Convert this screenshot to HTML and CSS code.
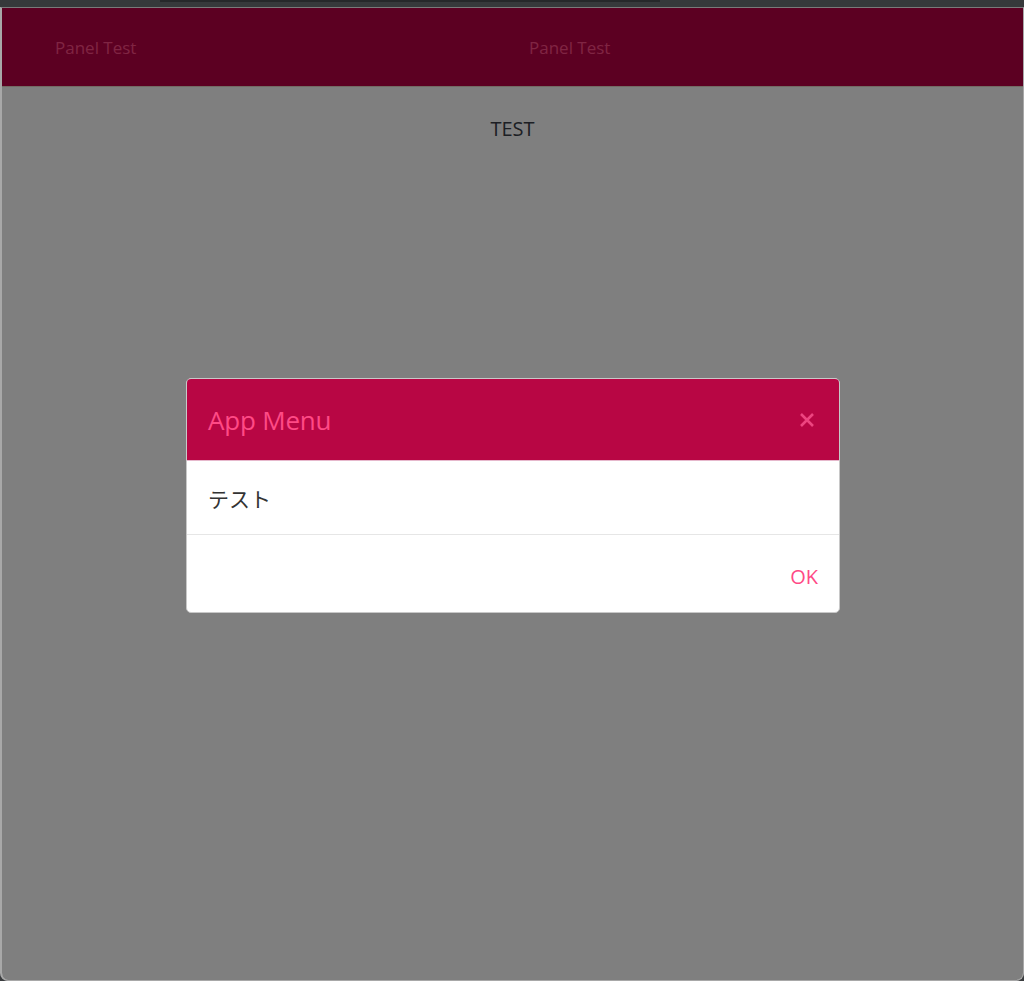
FILE: index.html
```html
<!DOCTYPE html>
<html lang="ja">
<head>
<meta charset="utf-8">
<title>Panel Test</title>
<link rel="stylesheet" href="styles.css">
</head>
<body>
<div class="topstrip"><div class="tabline"></div></div>
<div class="frame">
  <header class="appbar">
    <span class="appbar-item">Panel Test</span>
    <span class="appbar-title">Panel Test</span>
  </header>
  <main class="content">
    <p class="test">TEST</p>
  </main>
  <div class="overlay">
    <div class="modal">
      <div class="modal-header">
        <h2 class="modal-title">App Menu</h2>
        <button class="modal-close" aria-label="close">
          <svg width="16" height="16" viewBox="0 0 16 16"><path d="M2 2 L14 14 M14 2 L2 14" stroke="#ff5a94" stroke-width="2.6" stroke-linecap="butt" fill="none"/></svg>
        </button>
      </div>
      <div class="modal-body">テスト</div>
      <div class="modal-footer"><button class="ok">OK</button></div>
    </div>
  </div>
</div>
</body>
</html>
```
FILE: styles.css
```css
html, body { margin: 0; padding: 0; height: 100%; }
body {
  background: #3a3c3e;
  font-family: "Open Sans", "Noto Sans", "Noto Sans CJK JP", sans-serif;
  display: flex;
  flex-direction: column;
  overflow: hidden;
}
.topstrip {
  height: 7px;
  background: #36393b;
  flex: none;
}
.tabline {
  margin-left: 160px;
  width: 500px;
  height: 2px;
  background: #26282a;
}
.frame {
  flex: 1;
  position: relative;
  background: #ffffff;
  border-left: 2px solid #a8a8a8;
  border-right: 1px solid #a8a8a8;
  border-top: 1px solid #7a7a7a;
  border-bottom: 1px solid #a8a8a8;
  border-radius: 0 0 8px 8px;
  overflow: hidden;
  display: flex;
  flex-direction: column;
}
.appbar {
  height: 78px;
  background: #b80044;
  border-bottom: 1px solid #e6d7c8;
  display: flex;
  align-items: center;
  flex: none;
}
.appbar-item, .appbar-title {
  color: #ff4a86;
  font-size: 17px;
}
.appbar-item { margin-left: 53px; width: 474px; }
.content { flex: 1; text-align: center; }
.test {
  margin: 28px 0 0;
  font-size: 20px;
  color: #3a3f48;
}
.overlay {
  position: absolute;
  inset: 0;
  background: rgba(0, 0, 0, 0.5);
  display: flex;
  justify-content: center;
  padding-top: 370px;
  align-items: flex-start;
}
.modal {
  width: 652px;
  margin-left: 1px;
  background: #fff;
  border: 1px solid #c8c8c8;
  border-radius: 5px;
  overflow: hidden;
}
.modal-header {
  height: 81px;
  background: #b80644;
  border-bottom: 1px solid #e6b8cc;
  display: flex;
  align-items: center;
  justify-content: space-between;
  padding: 0 21px;
}
.modal-title {
  margin: 0;
  font-weight: 400;
  font-size: 26px;
  color: #ff4a86;
  letter-spacing: -0.2px;
}
.modal-close {
  background: none;
  border: 0;
  padding: 0;
  opacity: 0.75;
  display: flex;
  margin-right: 3px;
}
.modal-body {
  padding: 0 21px;
  height: 73px;
  display: flex;
  align-items: center;
  font-size: 21px;
  color: #333;
  border-bottom: 1px solid #e6e6e6;
}
.modal-footer {
  height: 77px;
  display: flex;
  justify-content: flex-end;
  align-items: center;
  padding: 0 21px;
}
.ok {
  background: none;
  border: 0;
  padding: 0;
  font-family: inherit;
  font-size: 20px;
  color: #ff4a86;
  margin-top: 5px;
}
```
